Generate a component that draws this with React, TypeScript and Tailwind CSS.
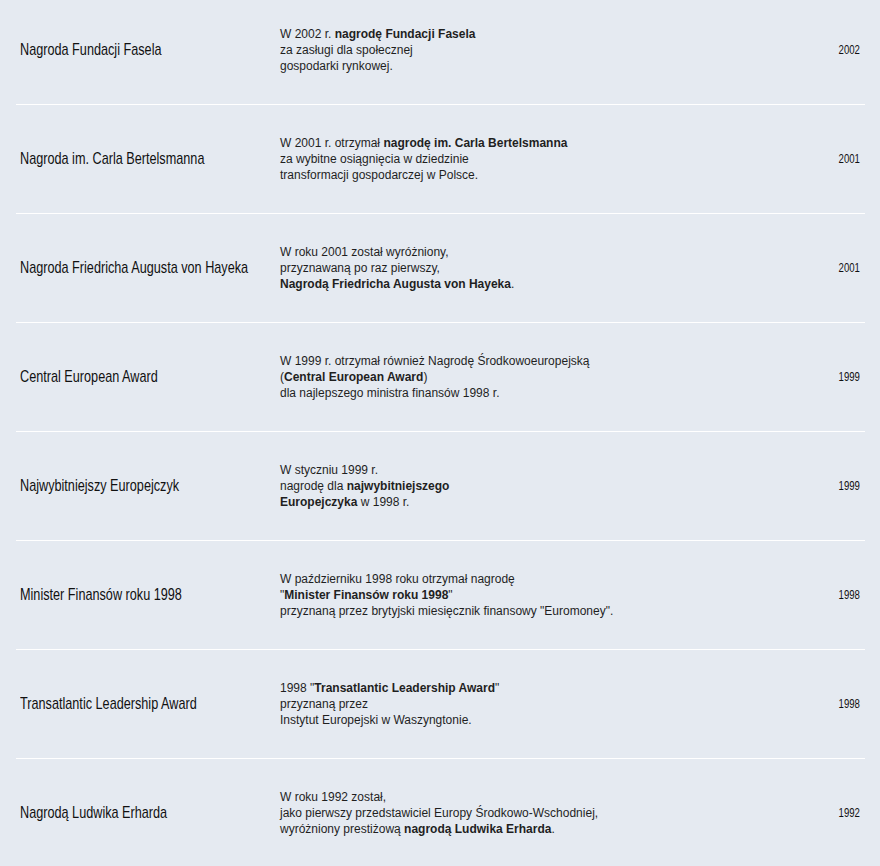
import React from "react";

type Award = {
  title: string;
  year: string;
  lines: React.ReactNode[];
};

const awards: Award[] = [
  {
    title: "Nagroda Fundacji Fasela",
    year: "2002",
    lines: [
      <>W 2002 r. <b>nagrodę Fundacji Fasela</b></>,
      <>za zasługi dla społecznej</>,
      <>gospodarki rynkowej.</>,
    ],
  },
  {
    title: "Nagroda im. Carla Bertelsmanna",
    year: "2001",
    lines: [
      <>W 2001 r. otrzymał <b>nagrodę im. Carla Bertelsmanna</b></>,
      <>za wybitne osiągnięcia w dziedzinie</>,
      <>transformacji gospodarczej w Polsce.</>,
    ],
  },
  {
    title: "Nagroda Friedricha Augusta von Hayeka",
    year: "2001",
    lines: [
      <>W roku 2001 został wyróżniony,</>,
      <>przyznawaną po raz pierwszy,</>,
      <><b>Nagrodą Friedricha Augusta von Hayeka</b>.</>,
    ],
  },
  {
    title: "Central European Award",
    year: "1999",
    lines: [
      <>W 1999 r. otrzymał również Nagrodę Środkowoeuropejską</>,
      <>(<b>Central European Award</b>)</>,
      <>dla najlepszego ministra finansów 1998 r.</>,
    ],
  },
  {
    title: "Najwybitniejszy Europejczyk",
    year: "1999",
    lines: [
      <>W styczniu 1999 r.</>,
      <>nagrodę dla <b>najwybitniejszego</b></>,
      <><b>Europejczyka</b> w 1998 r.</>,
    ],
  },
  {
    title: "Minister Finansów roku 1998",
    year: "1998",
    lines: [
      <>W październiku 1998 roku otrzymał nagrodę</>,
      <>"<b>Minister Finansów roku 1998</b>"</>,
      <>przyznaną przez brytyjski miesięcznik finansowy "Euromoney".</>,
    ],
  },
  {
    title: "Transatlantic Leadership Award",
    year: "1998",
    lines: [
      <>1998 "<b>Transatlantic Leadership Award</b>"</>,
      <>przyznaną przez</>,
      <>Instytut Europejski w Waszyngtonie.</>,
    ],
  },
  {
    title: "Nagrodą Ludwika Erharda",
    year: "1992",
    lines: [
      <>W roku 1992 został,</>,
      <>jako pierwszy przedstawiciel Europy Środkowo-Wschodniej,</>,
      <>wyróżniony prestiżową <b>nagrodą Ludwika Erharda</b>.</>,
    ],
  },
];

export default function App() {
  return (
    <main className="min-h-[866px] overflow-hidden bg-[#e5eaf1] text-[#1a1a1a]">
      <ul className="-mt-1 ml-[16px] mr-[15px]">
        {awards.map((a) => (
          <li
            key={a.title}
            className="flex h-[109px] items-center border-b border-white"
          >
            <div className="w-[264px] shrink-0 whitespace-nowrap pl-[4px]">
              <h2 className="inline-block origin-left scale-x-[0.745] font-['Liberation_Sans',Arial,sans-serif] text-[17px] font-normal text-[#111]">
                {a.title}
              </h2>
            </div>
            <div className="flex-1 font-['Liberation_Sans',Arial,sans-serif] text-[12px] leading-[16px] text-[#1f1f1f]">
              {a.lines.map((line, i) => (
                <p key={i}>{line}</p>
              ))}
            </div>
            <span className="inline-block origin-right scale-x-[0.8] pr-[6px] font-['Liberation_Sans',Arial,sans-serif] text-[12px] text-[#111]">
              {a.year}
            </span>
          </li>
        ))}
      </ul>
    </main>
  );
}
